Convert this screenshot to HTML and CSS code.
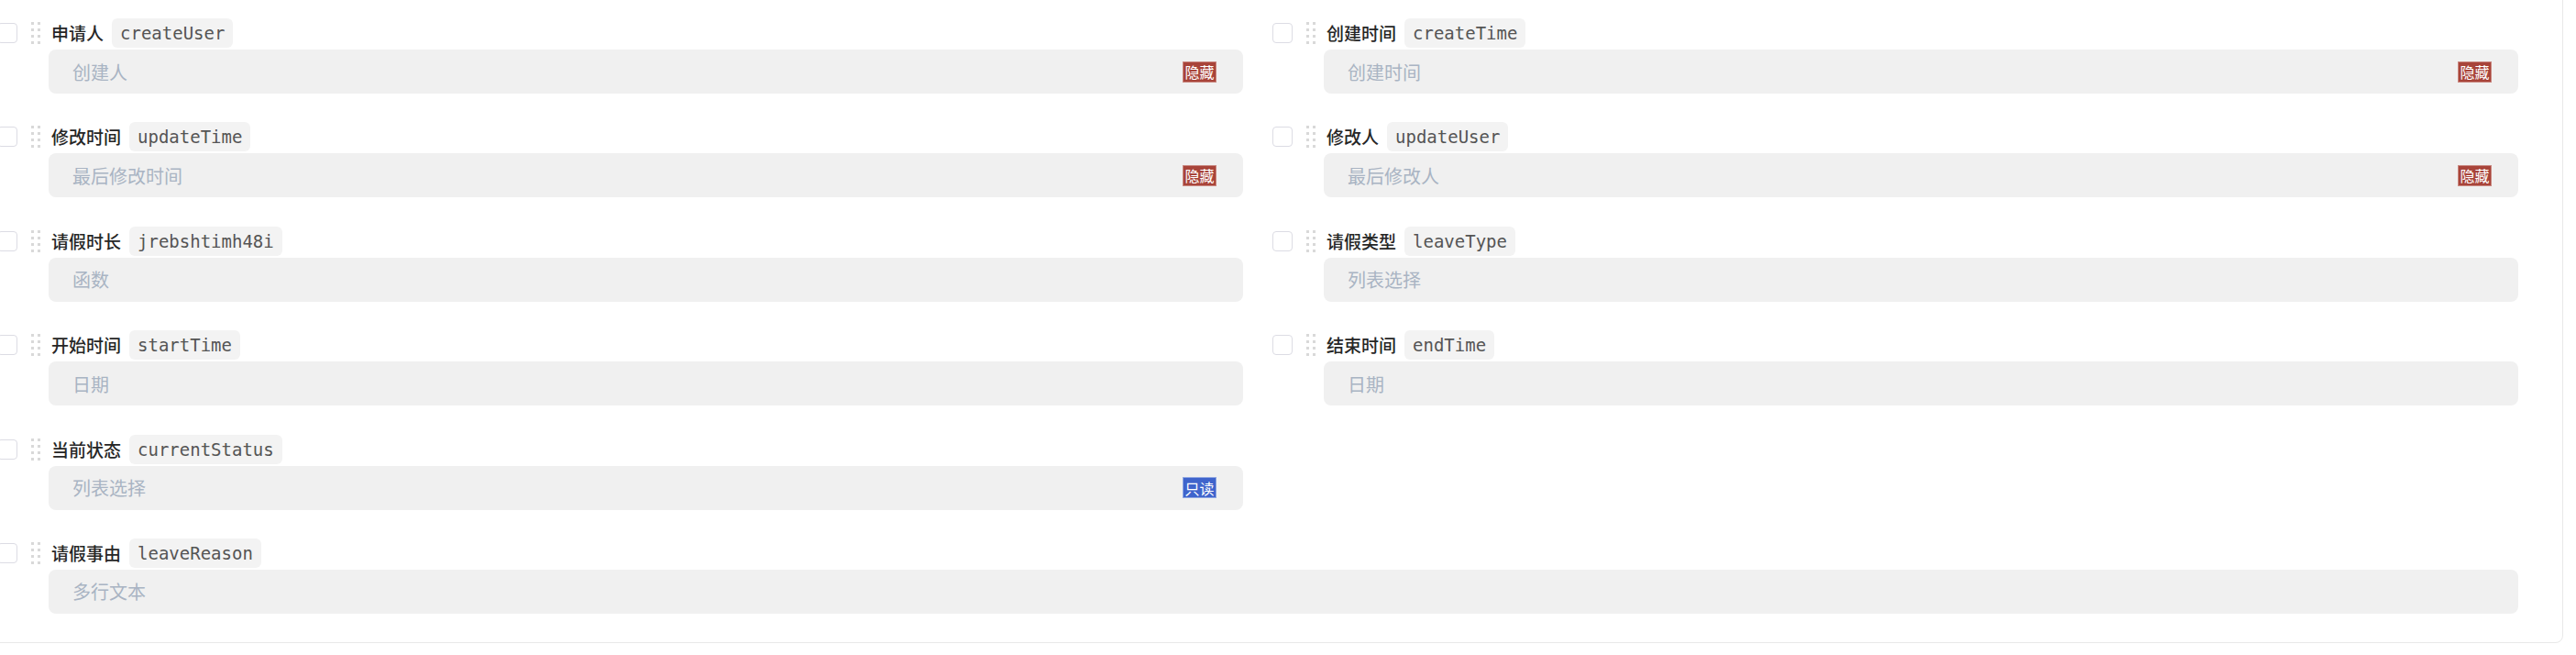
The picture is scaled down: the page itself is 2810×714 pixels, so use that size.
FILE: index.html
```html
<!DOCTYPE html>
<html lang="zh">
<head>
<meta charset="utf-8">
<link rel="stylesheet" href="styles.css">
</head>
<body>
<div class="panel">
  <div class="grid">
    <div class="field">
      <div class="ctrl"><span class="check"></span><svg class="handle" viewBox="0 0 10 24" width="10" height="24"><g fill="#d9d9d9"><rect x="0" y="0" width="3" height="3"/><rect x="7" y="0" width="3" height="3"/><rect x="0" y="7" width="3" height="3"/><rect x="7" y="7" width="3" height="3"/><rect x="0" y="14" width="3" height="3"/><rect x="7" y="14" width="3" height="3"/><rect x="0" y="21" width="3" height="3"/><rect x="7" y="21" width="3" height="3"/></g></svg></div>
      <div class="body">
        <div class="head"><span class="label">申请人</span><code class="key">createUser</code></div>
        <div class="input"><span class="ph">创建人</span><span class="badge hide">隐藏</span></div>
      </div>
    </div>
    <div class="field">
      <div class="ctrl"><span class="check"></span><svg class="handle" viewBox="0 0 10 24" width="10" height="24"><g fill="#d9d9d9"><rect x="0" y="0" width="3" height="3"/><rect x="7" y="0" width="3" height="3"/><rect x="0" y="7" width="3" height="3"/><rect x="7" y="7" width="3" height="3"/><rect x="0" y="14" width="3" height="3"/><rect x="7" y="14" width="3" height="3"/><rect x="0" y="21" width="3" height="3"/><rect x="7" y="21" width="3" height="3"/></g></svg></div>
      <div class="body">
        <div class="head"><span class="label">创建时间</span><code class="key">createTime</code></div>
        <div class="input"><span class="ph">创建时间</span><span class="badge hide">隐藏</span></div>
      </div>
    </div>
    <div class="field">
      <div class="ctrl"><span class="check"></span><svg class="handle" viewBox="0 0 10 24" width="10" height="24"><g fill="#d9d9d9"><rect x="0" y="0" width="3" height="3"/><rect x="7" y="0" width="3" height="3"/><rect x="0" y="7" width="3" height="3"/><rect x="7" y="7" width="3" height="3"/><rect x="0" y="14" width="3" height="3"/><rect x="7" y="14" width="3" height="3"/><rect x="0" y="21" width="3" height="3"/><rect x="7" y="21" width="3" height="3"/></g></svg></div>
      <div class="body">
        <div class="head"><span class="label">修改时间</span><code class="key">updateTime</code></div>
        <div class="input"><span class="ph">最后修改时间</span><span class="badge hide">隐藏</span></div>
      </div>
    </div>
    <div class="field">
      <div class="ctrl"><span class="check"></span><svg class="handle" viewBox="0 0 10 24" width="10" height="24"><g fill="#d9d9d9"><rect x="0" y="0" width="3" height="3"/><rect x="7" y="0" width="3" height="3"/><rect x="0" y="7" width="3" height="3"/><rect x="7" y="7" width="3" height="3"/><rect x="0" y="14" width="3" height="3"/><rect x="7" y="14" width="3" height="3"/><rect x="0" y="21" width="3" height="3"/><rect x="7" y="21" width="3" height="3"/></g></svg></div>
      <div class="body">
        <div class="head"><span class="label">修改人</span><code class="key">updateUser</code></div>
        <div class="input"><span class="ph">最后修改人</span><span class="badge hide">隐藏</span></div>
      </div>
    </div>
    <div class="field">
      <div class="ctrl"><span class="check"></span><svg class="handle" viewBox="0 0 10 24" width="10" height="24"><g fill="#d9d9d9"><rect x="0" y="0" width="3" height="3"/><rect x="7" y="0" width="3" height="3"/><rect x="0" y="7" width="3" height="3"/><rect x="7" y="7" width="3" height="3"/><rect x="0" y="14" width="3" height="3"/><rect x="7" y="14" width="3" height="3"/><rect x="0" y="21" width="3" height="3"/><rect x="7" y="21" width="3" height="3"/></g></svg></div>
      <div class="body">
        <div class="head"><span class="label">请假时长</span><code class="key">jrebshtimh48i</code></div>
        <div class="input"><span class="ph">函数</span></div>
      </div>
    </div>
    <div class="field">
      <div class="ctrl"><span class="check"></span><svg class="handle" viewBox="0 0 10 24" width="10" height="24"><g fill="#d9d9d9"><rect x="0" y="0" width="3" height="3"/><rect x="7" y="0" width="3" height="3"/><rect x="0" y="7" width="3" height="3"/><rect x="7" y="7" width="3" height="3"/><rect x="0" y="14" width="3" height="3"/><rect x="7" y="14" width="3" height="3"/><rect x="0" y="21" width="3" height="3"/><rect x="7" y="21" width="3" height="3"/></g></svg></div>
      <div class="body">
        <div class="head"><span class="label">请假类型</span><code class="key">leaveType</code></div>
        <div class="input"><span class="ph">列表选择</span></div>
      </div>
    </div>
    <div class="field">
      <div class="ctrl"><span class="check"></span><svg class="handle" viewBox="0 0 10 24" width="10" height="24"><g fill="#d9d9d9"><rect x="0" y="0" width="3" height="3"/><rect x="7" y="0" width="3" height="3"/><rect x="0" y="7" width="3" height="3"/><rect x="7" y="7" width="3" height="3"/><rect x="0" y="14" width="3" height="3"/><rect x="7" y="14" width="3" height="3"/><rect x="0" y="21" width="3" height="3"/><rect x="7" y="21" width="3" height="3"/></g></svg></div>
      <div class="body">
        <div class="head"><span class="label">开始时间</span><code class="key">startTime</code></div>
        <div class="input"><span class="ph">日期</span></div>
      </div>
    </div>
    <div class="field">
      <div class="ctrl"><span class="check"></span><svg class="handle" viewBox="0 0 10 24" width="10" height="24"><g fill="#d9d9d9"><rect x="0" y="0" width="3" height="3"/><rect x="7" y="0" width="3" height="3"/><rect x="0" y="7" width="3" height="3"/><rect x="7" y="7" width="3" height="3"/><rect x="0" y="14" width="3" height="3"/><rect x="7" y="14" width="3" height="3"/><rect x="0" y="21" width="3" height="3"/><rect x="7" y="21" width="3" height="3"/></g></svg></div>
      <div class="body">
        <div class="head"><span class="label">结束时间</span><code class="key">endTime</code></div>
        <div class="input"><span class="ph">日期</span></div>
      </div>
    </div>
    <div class="field">
      <div class="ctrl"><span class="check"></span><svg class="handle" viewBox="0 0 10 24" width="10" height="24"><g fill="#d9d9d9"><rect x="0" y="0" width="3" height="3"/><rect x="7" y="0" width="3" height="3"/><rect x="0" y="7" width="3" height="3"/><rect x="7" y="7" width="3" height="3"/><rect x="0" y="14" width="3" height="3"/><rect x="7" y="14" width="3" height="3"/><rect x="0" y="21" width="3" height="3"/><rect x="7" y="21" width="3" height="3"/></g></svg></div>
      <div class="body">
        <div class="head"><span class="label">当前状态</span><code class="key">currentStatus</code></div>
        <div class="input"><span class="ph">列表选择</span><span class="badge ro">只读</span></div>
      </div>
    </div>
    <div class="field wide">
      <div class="ctrl"><span class="check"></span><svg class="handle" viewBox="0 0 10 24" width="10" height="24"><g fill="#d9d9d9"><rect x="0" y="0" width="3" height="3"/><rect x="7" y="0" width="3" height="3"/><rect x="0" y="7" width="3" height="3"/><rect x="7" y="7" width="3" height="3"/><rect x="0" y="14" width="3" height="3"/><rect x="7" y="14" width="3" height="3"/><rect x="0" y="21" width="3" height="3"/><rect x="7" y="21" width="3" height="3"/></g></svg></div>
      <div class="body">
        <div class="head"><span class="label">请假事由</span><code class="key">leaveReason</code></div>
        <div class="input"><span class="ph">多行文本</span></div>
      </div>
    </div>
  </div>
</div>
</body>
</html>
```
FILE: styles.css
```css
html, body {
  margin: 0;
  padding: 0;
  background: #ffffff;
  overflow: hidden;
}
body {
  width: 2810px;
  height: 714px;
  font-family: "Noto Sans CJK SC", "Noto Sans", sans-serif;
}
.panel {
  box-sizing: border-box;
  width: 2847px;
  margin-left: -51px;
  margin-top: -20px;
  padding: 39px 48px 31px 47px;
  border: 1px solid #e8e8e8;
  border-radius: 8px;
  background: #fff;
}
.grid {
  display: grid;
  grid-template-columns: 1fr 1fr;
  column-gap: 32px;
  row-gap: 31.4px;
}
.field {
  display: flex;
}
.field.wide {
  grid-column: 1 / span 2;
}
.ctrl {
  width: 56px;
  flex: none;
  display: flex;
  align-items: flex-start;
}
.check {
  box-sizing: border-box;
  width: 22px;
  height: 22px;
  margin-top: 5px;
  border: 1px solid #dcdce4;
  border-radius: 4px;
  background: #fff;
}
.handle {
  display: block;
  margin-top: 4px;
  margin-left: 15px;
}
.body {
  flex: 1;
  min-width: 0;
  display: flex;
  flex-direction: column;
}
.head {
  height: 34px;
  display: flex;
  align-items: flex-start;
  padding-left: 3px;
}
.label {
  height: 32px;
  line-height: 32px;
  font-size: 19px;
  font-weight: 500;
  color: #262626;
  margin-right: 9px;
}
.key {
  height: 32px;
  line-height: 32px;
  padding: 0 9px;
  font-family: "DejaVu Sans Mono", monospace;
  font-size: 19px;
  color: #555555;
  background: #f3f3f3;
  border-radius: 6px;
}
.input {
  box-sizing: border-box;
  height: 48px;
  display: flex;
  align-items: center;
  justify-content: space-between;
  padding: 0 29px 0 26px;
  background: #f0f0f0;
  border-radius: 8px;
}
.ph {
  font-size: 20px;
  color: #a9b4c3;
}
.badge {
  box-sizing: border-box;
  height: 23px;
  width: 37px;
  display: flex;
  align-items: center;
  justify-content: center;
  font-size: 16px;
  color: #ffffff;
  border: 1px solid;
}
.badge.hide {
  background: #a8443a;
  border-color: #c9877f;
}
.badge.ro {
  background: #3f64cc;
  border-color: #8ea6e2;
}
```
